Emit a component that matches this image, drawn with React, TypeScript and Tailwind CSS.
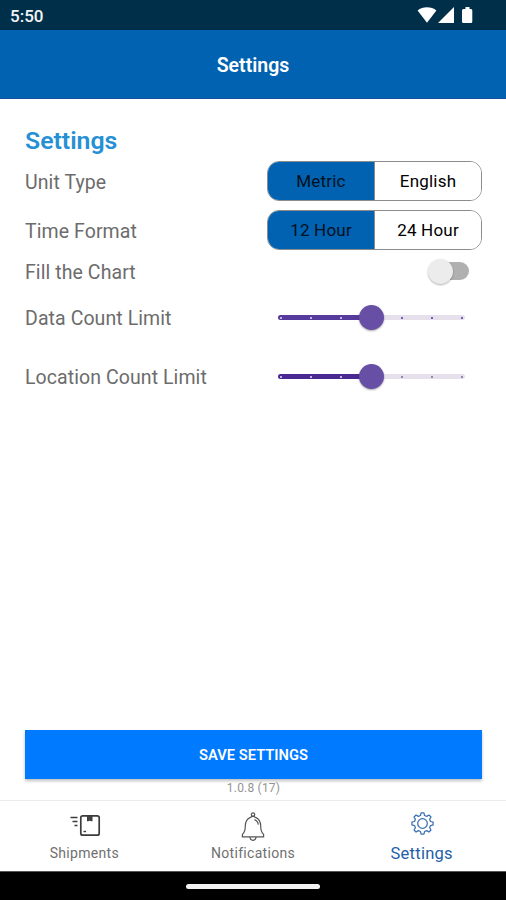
import { ReactNode, useState } from "react";
import clsx from "clsx";

function StatusBar() {
  return (
    <div className="flex h-[30px] items-center justify-between bg-[#002f4a] pr-8 pl-[10px] text-[#f3f5f7]">
      <span className="pt-[2px] text-[17px] leading-none font-medium">5:50</span>
      <svg width="57" height="18" viewBox="0 0 57 18" fill="#fff">
        <path d="M0.6 4.4 C5.5 0.2 14.5 0.2 19.4 4.4 L10 16.8 Z" />
        <path d="M21 17 L37 1 V17 Z" />
        <path d="M46.5 3 H48.5 V1 H52.5 V3 H54 Q55.3 3 55.3 4.5 V15.5 Q55.3 17 54 17 H46.5 Q45 17 45 15.5 V4.5 Q45 3 46.5 3 Z" />
      </svg>
    </div>
  );
}

function Row({ label, className, children }: { label: string; className: string; children: ReactNode }) {
  return (
    <div className={clsx("flex items-center justify-between", className)}>
      <span className="pt-[2px] text-[19.5px] leading-none tracking-[0.08px] text-[#6c6c6c]">{label}</span>
      {children}
    </div>
  );
}

function Segmented({ options }: { options: string[] }) {
  const [active, setActive] = useState(0);

  return (
    <div className="mb-[2px] flex h-10 w-[215px] overflow-hidden rounded-[12px] border border-[#8c8c8c]">
      {options.map((option, i) => (
        <button
          key={option}
          onClick={() => setActive(i)}
          className={clsx(
            "flex-1 pt-[2px] text-[17px] leading-none tracking-[0.2px]",
            i > 0 && "border-l border-[#8c8c8c]",
            i === active ? "bg-[#0062b0] text-[#02101d]" : "bg-white text-black"
          )}
        >
          {option}
        </button>
      ))}
    </div>
  );
}

function Toggle() {
  return (
    <div className="mr-[13px] mb-[2px] flex h-[26px] w-[41px] items-center justify-end">
      <div className="relative h-[18px] w-[36px] rounded-full bg-[#b0b0b0]">
        <div className="absolute -top-[3px] -left-[5px] size-[25px] rounded-full bg-[#ececec] shadow-[0_1px_2px_rgba(0,0,0,0.3)]" />
      </div>
    </div>
  );
}

const TICKS = [0, 1, 2, 3, 4, 5, 6];

function Slider({ value, track, tick }: { value: number; track: string; tick: string }) {
  return (
    <div className="relative mr-[17px] mb-[1px] h-[5px] w-[187px] rounded-full bg-[#e6e0ec]">
      <div className={clsx("h-full rounded-full", track)} style={{ width: `${(value / 6) * 100}%` }} />
      <div className="absolute inset-0 flex items-center justify-between px-[2px]">
        {TICKS.map((t) => (
          <span key={t} className={clsx("size-[2px] rounded-full", t < value ? "bg-[#eadffa]" : tick)} />
        ))}
      </div>
      <div
        className="absolute -top-[10px] -ml-[12.5px] size-[25px] rounded-full bg-[#674fa6] shadow-[0_1px_2px_rgba(0,0,0,0.35)]"
        style={{ left: `${(value / 6) * 100}%` }}
      />
    </div>
  );
}

function BoxIcon() {
  return (
    <svg width="34" height="30" viewBox="0 0 34 30" fill="none" stroke="#3c3c3c" className="mr-[1px]">
      <rect x="13.8" y="5.8" width="18.4" height="19.4" rx="2" strokeWidth="1.7" />
      <path d="M20.5 6 V11 L22.8 10.2 L25 11 V6 Z" fill="#444" strokeWidth="1" />
      <path d="M16.5 21.5 H19" strokeWidth="1.4" />
      <path d="M3.5 7.5 H10.5 M5.5 11.5 H10.5 M7.5 15.5 H10.5" strokeWidth="1.5" />
    </svg>
  );
}

function BellIcon() {
  return (
    <svg width="26" height="32" viewBox="0 0 26 32" fill="none" stroke="#555" strokeWidth="1.2" className="mt-[3px]">
      <circle cx="13" cy="3.6" r="1.7" />
      <path d="M10.4 6.4 Q13 4.4 15.6 6.4 C19.2 8 20.7 11 20.7 15 C20.7 19 21.3 21.5 23.6 23.4 V25.8 H2.4 V23.4 C4.7 21.5 5.3 19 5.3 15 C5.3 11 6.8 8 10.4 6.4 Z" />
      <path d="M10 26 C10.3 30.4 15.7 30.4 16 26" />
      <path d="M14.5 8.6 C16.8 9.5 18.1 11.2 18.3 13.6" />
    </svg>
  );
}

function GearIcon() {
  return (
    <svg width="26" height="26" viewBox="0 0 27 27" fill="none" stroke="#3b70b0" strokeWidth="1.3" strokeLinejoin="round" className="mb-[2px] ml-[2px]">
      <path d="M11.5 2 H14.5 L15.1 4.7 L17.4 5.6 L19.7 4.2 L21.8 6.3 L20.4 8.6 L21.3 10.9 L24 11.5 V14.5 L21.3 15.1 L20.4 17.4 L21.8 19.7 L19.7 21.8 L17.4 20.4 L15.1 21.3 L14.5 24 H11.5 L10.9 21.3 L8.6 20.4 L6.3 21.8 L4.2 19.7 L5.6 17.4 L4.7 15.1 L2 14.5 V11.5 L4.7 10.9 L5.6 8.6 L4.2 6.3 L6.3 4.2 L8.6 5.6 L10.9 4.7 Z" />
      <circle cx="13" cy="13" r="5" />
    </svg>
  );
}

function Tab({ icon, label, active }: { icon: ReactNode; label: string; active?: boolean }) {
  return (
    <button className="flex flex-1 flex-col items-center pt-[8px]">
      <span className="flex h-8 items-center">{icon}</span>
      <span
        className={clsx(
          "flex items-center leading-none",
          active ? "h-[26px] text-[16.5px] tracking-[0.25px] text-[#1f5da8]" : "h-6 text-[14px] tracking-[0.3px] text-[#707070]"
        )}
      >
        {label}
      </span>
    </button>
  );
}

export default function App() {
  return (
    <div className="flex h-[900px] w-[506px] flex-col bg-white font-[Roboto,sans-serif]">
      <StatusBar />

      <header className="flex h-[69px] items-center justify-center border-b border-[#1450a0] bg-[#0062b0] pt-[4px]">
        <h1 className="text-[19.5px] leading-none font-semibold text-white">Settings</h1>
      </header>

      <main className="flex flex-1 flex-col px-6 pt-[24px] pl-[25px]">
        <h2 className="flex h-[34px] items-center pt-[3px] text-[24.8px] leading-none font-semibold text-[#2690d4]">Settings</h2>

        <Row label="Unit Type" className="h-[49px]">
          <Segmented options={["Metric", "English"]} />
        </Row>
        <Row label="Time Format" className="h-[49px]">
          <Segmented options={["12 Hour", "24 Hour"]} />
        </Row>
        <Row label="Fill the Chart" className="h-[33px]">
          <Toggle />
        </Row>
        <Row label="Data Count Limit" className="h-[60px]">
          <Slider value={3} track="bg-[#573b9c]" tick="bg-[#4f369c]" />
        </Row>
        <Row label="Location Count Limit" className="h-[58px]">
          <Slider value={3} track="bg-[#4a2a92]" tick="bg-[#7a6a96]" />
        </Row>

        <div className="mt-auto">
          <button className="flex h-[49px] w-full items-center justify-center bg-[#007aff] pt-[2px] text-[14.7px] font-semibold text-white shadow-[0_2px_3px_rgba(0,0,0,0.25)]">
            SAVE SETTINGS
          </button>
          <p className="h-[21px] pt-[2px] text-center text-[12px] leading-[14px] tracking-[0.2px] text-[#949494]">1.0.8 (17)</p>
        </div>
      </main>

      <nav className="flex h-[71px] border-t border-[#ececec]">
        <Tab icon={<BoxIcon />} label="Shipments" />
        <Tab icon={<BellIcon />} label="Notifications" />
        <Tab icon={<GearIcon />} label="Settings" active />
      </nav>

      {/* Android gesture bar */}
      <div className="flex h-[29px] items-center justify-center border-t border-[#555] bg-black">
        <div className="h-[5px] w-[134px] rounded-full bg-[#f2f2f2]" />
      </div>
    </div>
  );
}
